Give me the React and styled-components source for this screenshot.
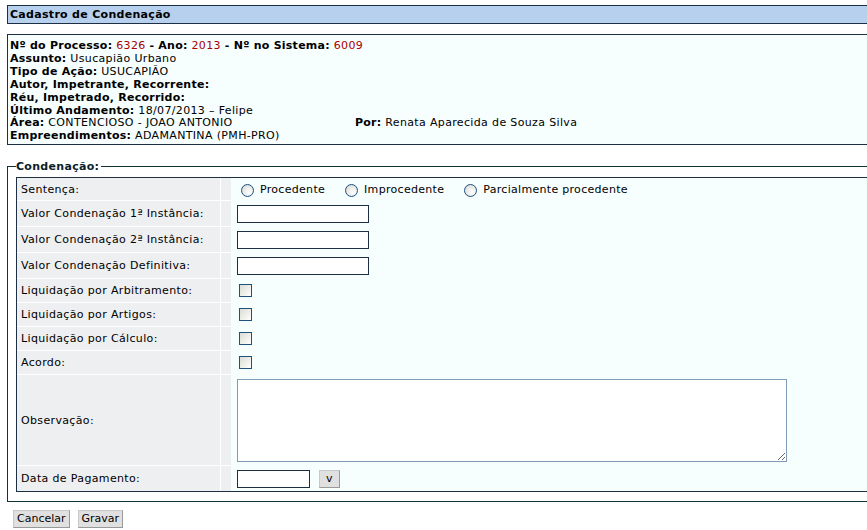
import React from 'react'
import styled, { createGlobalStyle } from 'styled-components'

const GlobalStyle = createGlobalStyle`
html, body {
    margin: 0;
    padding: 0;
    overflow: hidden;
    background: #fff;
}
body {
    font-family: "DejaVu Sans", Verdana, sans-serif;
    font-size: 11px;
    letter-spacing: 0.35px;
    color: #000;
}
b {
    letter-spacing: 0.25px;
}
`

const Page = styled.div`
width: 900px;
padding: 5px 0 0 7px;
`

const TitleBar = styled.div`
height: 17px;
line-height: 17px;
background: #b7d0ee;
border: 1px solid #1c2f45;
padding-left: 2px;
font-weight: bold;
letter-spacing: 0.3px;
`

const InfoBox = styled.div`
margin-top: 10px;
background: #f6fefe;
border: 1px solid #1c2f45;
padding: 5px 2px 1px 2px;
line-height: 12.9px;
`

const Line = styled.div`
display: flex;
`

const Half = styled.div`
width: ${props => props.w || 'auto'};
`

const Red = styled.span`
color: #a80000;
`

const Fieldset = styled.fieldset`
margin: 15px 0 0 0;
border: 1px solid #0e3535;
padding: 4px 8px 9px 8px;
min-width: 0;
`

const Legend = styled.legend`
padding: 0 2px 0 0;
font-weight: bold;
line-height: 13px;
letter-spacing: 0.3px;
color: #0a1e2a;
`

const FormTable = styled.table`
width: 100%;
border: 1px solid #1c2f45;
border-collapse: separate;
border-spacing: 0;
background: #f6fefe;
`

const Row = styled.tr`
height: ${props => props.h}px;
`

const LabelCell = styled.td`
width: 199px;
background: #eeeff1;
padding: 0 0 0 4px;
border-right: 1px solid #fff;
border-bottom: ${props => props.last ? 'none' : '1px solid #fff'};
white-space: nowrap;
`

const SpacerCell = styled.td`
width: 10px;
padding: 0;
background: #eeeff1;
border-bottom: ${props => props.last ? 'none' : '1px solid #fff'};
`

const FieldCell = styled.td`
padding: 0 0 0 6px;
border-bottom: ${props => props.last ? 'none' : '1px solid transparent'};
`

const RadioGroup = styled.div`
display: flex;
align-items: center;
letter-spacing: 0.3px;
`

const RadioOption = styled.label`
display: flex;
align-items: center;
margin-right: 16px;
`

const Radio = styled.input.attrs({ type: 'radio' })`
appearance: none;
width: 13px;
height: 13px;
margin: 2px 6px 0 4px;
border: 1px solid #1c5180;
border-radius: 50%;
background: radial-gradient(circle at 65% 65%, #ffffff 0%, #ececea 45%, #d4d4cc 100%);
box-sizing: border-box;
`

const CheckBox = styled.input.attrs({ type: 'checkbox' })`
appearance: none;
display: block;
width: 13px;
height: 13px;
margin: 0 0 0 2px;
border: 1px solid #1c5180;
background: linear-gradient(135deg, #dcdcd6 0%, #f0f0ec 60%, #ffffff 100%);
box-sizing: border-box;
`

const TextInput = styled.input`
display: block;
width: ${props => props.w}px;
height: 18px;
box-sizing: border-box;
border: 1px solid #1c2f45;
background: #fff;
padding: 0 2px;
font: inherit;
`

const TextArea = styled.textarea`
display: block;
width: 550px;
height: 83px;
box-sizing: border-box;
border: 1px solid #7f9db9;
background: #fff;
margin: 0;
font: inherit;
`

const DateWrap = styled.div`
display: flex;
align-items: center;
gap: 9px;
`

const SmallButton = styled.button`
height: 18px;
padding: 0 ${props => props.px || 3}px;
background: #e0e0e0;
border: 1px solid;
border-color: #c8c8c8 #999 #999 #c8c8c8;
font-family: "DejaVu Sans", Verdana, sans-serif;
font-size: 11px;
letter-spacing: 0;
line-height: 14px;
color: #000;
`

const Actions = styled.div`
display: flex;
gap: 8px;
margin: 8px 0 0 6px;
`

const inputRows = [
    'Valor Condenação 1ª Instância:',
    'Valor Condenação 2ª Instância:',
    'Valor Condenação Definitiva:',
]

const checkRows = [
    'Liquidação por Arbitramento:',
    'Liquidação por Artigos:',
    'Liquidação por Cálculo:',
    'Acordo:',
]

function App() {
    return (
        <Page>
            <GlobalStyle />
            <TitleBar>Cadastro de Condenação</TitleBar>
            <InfoBox>
                <Line>
                    <span>
                        <b>Nº do Processo:</b> <Red>6326</Red> <b>- Ano:</b> <Red>2013</Red> <b>- Nº no Sistema:</b> <Red>6009</Red>
                    </span>
                </Line>
                <Line><span><b>Assunto:</b> Usucapião Urbano</span></Line>
                <Line><span><b>Tipo de Ação:</b> USUCAPIÃO</span></Line>
                <Line><span><b>Autor, Impetrante, Recorrente:</b></span></Line>
                <Line><span><b>Réu, Impetrado, Recorrido:</b></span></Line>
                <Line><span><b>Último Andamento:</b> 18/07/2013 – Felipe</span></Line>
                <Line>
                    <Half w="345px"><b>Área:</b> CONTENCIOSO - JOAO ANTONIO</Half>
                    <Half><b>Por:</b> Renata Aparecida de Souza Silva</Half>
                </Line>
                <Line><span><b>Empreendimentos:</b> ADAMANTINA (PMH-PRO)</span></Line>
            </InfoBox>

            <Fieldset>
                <Legend>Condenação:</Legend>
                <FormTable>
                    <tbody>
                        <Row h={23}>
                            <LabelCell>Sentença:</LabelCell>
                            <SpacerCell />
                            <FieldCell>
                                <RadioGroup>
                                    <RadioOption><Radio name="sentenca" />Procedente</RadioOption>
                                    <RadioOption><Radio name="sentenca" />Improcedente</RadioOption>
                                    <RadioOption><Radio name="sentenca" />Parcialmente procedente</RadioOption>
                                </RadioGroup>
                            </FieldCell>
                        </Row>
                        {inputRows.map(label => (
                            <Row h={26} key={label}>
                                <LabelCell>{label}</LabelCell>
                                <SpacerCell />
                                <FieldCell><TextInput w={132} /></FieldCell>
                            </Row>
                        ))}
                        {checkRows.map(label => (
                            <Row h={24} key={label}>
                                <LabelCell>{label}</LabelCell>
                                <SpacerCell />
                                <FieldCell><CheckBox /></FieldCell>
                            </Row>
                        ))}
                        <Row h={91}>
                            <LabelCell>Observação:</LabelCell>
                            <SpacerCell />
                            <FieldCell><TextArea /></FieldCell>
                        </Row>
                        <Row h={25}>
                            <LabelCell last>Data de Pagamento:</LabelCell>
                            <SpacerCell last />
                            <FieldCell last>
                                <DateWrap>
                                    <TextInput w={73} />
                                    <SmallButton px={6}>v</SmallButton>
                                </DateWrap>
                            </FieldCell>
                        </Row>
                    </tbody>
                </FormTable>
            </Fieldset>

            <Actions>
                <SmallButton>Cancelar</SmallButton>
                <SmallButton>Gravar</SmallButton>
            </Actions>
        </Page>
    )
}

export default App
